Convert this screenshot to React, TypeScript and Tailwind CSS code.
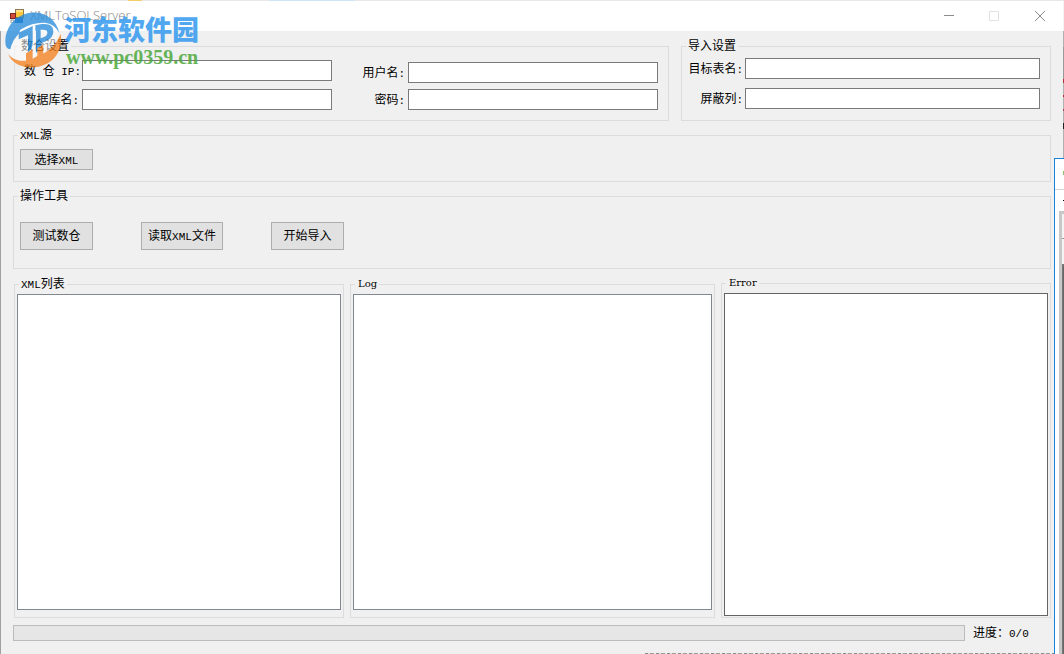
import type { ReactNode } from "react";

function Mixed({ text }: { text: string }) {
  return (
    <>
      {text.split(/([\x20-\x7e]+)/).map((part, i) =>
        /^[\x20-\x7e]+$/.test(part) ? (
          <span key={i} className="text-[11px]">
            {part}
          </span>
        ) : (
          part
        ),
      )}
    </>
  );
}

function Group({ title, className = "", children }: { title: string; className?: string; children: ReactNode }) {
  return (
    <fieldset className={`min-w-0 border border-[#dcdcdc] ${className}`}>
      <legend className="ml-1 h-4 px-0.5 leading-[18px]">
        {/^[\x20-\x7e]+$/.test(title) ? (
          <span className="block pl-px font-['DejaVu_Serif',serif] text-[10px] leading-4">{title}</span>
        ) : (
          <Mixed text={title} />
        )}
      </legend>
      {children}
    </fieldset>
  );
}

function Field({ id, label, labelClass, type = "text" }: { id: string; label: string; labelClass: string; type?: string }) {
  return (
    <div className="flex items-center">
      <label htmlFor={id} className={`shrink-0 pt-0.5 text-right whitespace-pre leading-4 ${labelClass}`}>
        <Mixed text={label} />
      </label>
      <input id={id} type={type} className="h-[21px] min-w-0 flex-1 border border-[#7a7a7a] bg-white px-1 outline-none" />
    </div>
  );
}

function PushButton({ label, className }: { label: string; className: string }) {
  return (
    <button type="button" className={`shrink-0 border border-[#adadad] bg-[#e1e1e1] pt-0.5 leading-4 whitespace-nowrap ${className}`}>
      <Mixed text={label} />
    </button>
  );
}

function ListPane({ title, className, padClass, boxClass }: { title: string; className?: string; padClass: string; boxClass: string }) {
  return (
    <Group title={title} className={`flex flex-col ${className ?? ""}`}>
      <div className={`flex flex-1 px-0.5 pt-0.5 ${padClass}`}>
        <textarea aria-label={title} readOnly className={`min-h-24 min-w-0 flex-1 resize-none border bg-white p-1 outline-none ${boxClass}`} />
      </div>
    </Group>
  );
}

function TitleBar() {
  return (
    <header className="flex h-[30px] items-center bg-white pl-2.5">
      <svg width="14" height="14" viewBox="0 0 14 14" aria-hidden="true">
        <rect x="5" y="0" width="9" height="9" fill="#8b7a4c" />
        <rect x="6" y="1" width="7" height="7" fill="#ffc83a" />
        <rect x="6" y="1" width="7" height="2" fill="#ffe08a" />
        <rect x="0" y="4" width="6" height="6" fill="#7b2525" />
        <rect x="1" y="5" width="4" height="4" fill="#d24a38" />
        <rect x="5" y="9" width="8" height="5" fill="#3872b8" />
        <rect x="1" y="11" width="3" height="3" fill="#fff" stroke="#999" />
      </svg>
      <h1 className="ml-1.5 flex-1 font-['Open_Sans',sans-serif] text-[13px] font-light text-[#888]">XMLToSQLServer</h1>
      <button type="button" aria-label="最小化" className="flex h-full w-[45px] items-center justify-center">
        <svg width="10" height="10" viewBox="0 0 10 10"><path d="M0 4.5h10" stroke="#8c8c8c" /></svg>
      </button>
      <button type="button" aria-label="最大化" disabled className="flex h-full w-[45px] items-center justify-center">
        <svg width="10" height="10" viewBox="0 0 10 10"><path d="M.5.5h9v9h-9z" fill="none" stroke="#e2e2e2" /></svg>
      </button>
      <button type="button" aria-label="关闭" className="flex h-full w-[47px] items-center justify-center">
        <svg width="10" height="10" viewBox="0 0 10 10"><path d="M0 0l10 10M10 0L0 10" stroke="#888" /></svg>
      </button>
    </header>
  );
}

function Watermark() {
  return (
    <div className="pointer-events-none absolute top-3 left-1 flex opacity-85">
      <svg width="60" height="56" viewBox="12 36 180 168" className="opacity-90" aria-hidden="true">
        <path d="M24 142C40 104 74 74 120 62c30-6 52 4 58 30-8 44-52 84-104 104C46 188 28 168 24 142z" fill="#fff" opacity=".7" />
        <path d="M17 136C10 88 44 42 94 38c44-3 76 22 84 62-10-20-24-30-44-32C88 66 44 92 17 136z" fill="#258cdc" />
        <path d="M17 136c8-22 24-40 42-52v14c-14 14-24 30-28 50-6 0-12-4-14-12z" fill="#258cdc" />
        <path d="M56 98l42-20v52c0 12-5 20-14 28V106l-28 12z" fill="#258cdc" />
        <path d="M106 76c36-10 54-2 54 18 0 18-14 30-36 34v22l-16 8V90h14v24c12-2 20-8 20-16 0-10-12-10-36-6z" fill="#258cdc" />
        <path
          d="M182 102c10 52-26 96-80 100-38 2-66-12-78-40 14 16 32 22 54 20v-22l20-12v28l14-8v-24l18-9v26c24-14 42-34 52-59z"
          fill="#f58220"
        />
      </svg>
      <div className="flex flex-col">
        <span className="font-['Noto_Sans_CJK_SC',sans-serif] text-[27px] leading-[34px] font-black text-[#3399ee]">河东软件园</span>
        <span className="ml-0.5 font-['Liberation_Serif',serif] text-[20px] leading-[22px] font-bold text-[#4da93c]">www.pc0359.cn</span>
      </div>
    </div>
  );
}

function BackgroundWindow() {
  return (
    <div className="absolute top-[158px] right-0 bottom-0 flex w-2.5 flex-col border-t border-l border-[#1883d7] bg-white" aria-hidden="true">
      <div className="flex h-[31px] items-center justify-end border-b border-[#d4d4d4] pb-0.5">
        <span className="h-1 w-px bg-[#8cc56c]" />
      </div>
      <div className="flex h-[21px] items-center justify-end">
        <span className="h-px w-px bg-black" />
      </div>
      <div className="ml-1 flex flex-1 flex-col border-t-3 border-l-3 border-[#c8c8c8]">
        <div className="h-[25px] border-b border-[#999] bg-[#f4f4f4]" />
        <div className="h-[25px] bg-[#f4f4f4]" />
        <div className="flex-1 border-t-2 border-l border-[#777] bg-[#666]" />
      </div>
    </div>
  );
}

export default function App() {
  return (
    <div className="relative flex min-h-screen flex-col bg-[#f0f0f0] font-['Liberation_Mono','Noto_Sans_CJK_SC',monospace] text-[12px] text-black">
      <div className="flex h-px bg-[#e8e8e8]">
        <span className="ml-32 w-3.5 bg-[#f4cf68]" />
        <span className="ml-32 w-[84px] bg-[#cfe4f8]" />
      </div>
      <div className="flex flex-1">
        <div className="flex min-w-0 flex-1 flex-col">
          <TitleBar />
          <main className="flex flex-1 flex-col border-l border-[#a0a0a0] px-3 pt-[7px] pb-[13px]">
            <div className="grid grid-cols-[655fr_370fr] gap-3 pl-px">
              <Group title="数仓设置">
                <div className="grid grid-cols-[308fr_297fr] gap-[29px] pr-2.5 pb-2.5 pl-[9px]">
                  <div className="flex flex-col gap-2 pt-1.5">
                    <Field id="ip" label="数 仓 IP:" labelClass="w-[58px] pr-[3px]" />
                    <Field id="db" label="数据库名:" labelClass="w-[58px] pr-[3px]" />
                  </div>
                  <div className="flex flex-col gap-1.5 pt-2">
                    <Field id="user" label="用户名:" labelClass="w-[47px] pr-[3px]" />
                    <Field id="password" label="密码:" labelClass="w-[47px] pr-[3px]" type="password" />
                  </div>
                </div>
              </Group>
              <Group title="导入设置">
                <div className="flex flex-col gap-[9px] pt-1 pr-2.5 pl-1.5">
                  <Field id="table" label="目标表名:" labelClass="w-[57px] pr-0.5" />
                  <Field id="mask" label="屏蔽列:" labelClass="w-[57px] pr-0.5" />
                </div>
              </Group>
            </div>

            <Group title="XML源" className="mt-1.5">
              <div className="flex px-1.5 pt-1.5 pb-[11px]">
                <PushButton label="选择XML" className="h-[21px] w-[73px]" />
              </div>
            </Group>

            <Group title="操作工具" className="mt-1.5">
              <div className="flex gap-12 px-1.5 py-[18px]">
                <PushButton label="测试数仓" className="h-7 w-[73px]" />
                <PushButton label="读取XML文件" className="h-7 w-[82px]" />
                <PushButton label="开始导入" className="h-7 w-[73px]" />
              </div>
            </Group>

            <div className="mt-1.5 grid flex-1 grid-cols-[330fr_365fr_330fr] gap-1.5 pl-px">
              <ListPane title="XML列表" className="mt-px" padClass="pb-[7px]" boxClass="border-[#828790]" />
              <ListPane title="Log" className="mt-px" padClass="pb-[7px]" boxClass="border-[#828790]" />
              <ListPane title="Error" padClass="pb-px" boxClass="border-[#646464]" />
            </div>

            <div className="mt-[7px] flex h-4 items-center gap-2">
              <progress
                aria-label="进度"
                value={0}
                max={1}
                className="h-4 min-w-0 flex-1 appearance-none border border-[#bcbcbc] bg-[#e6e6e6] [&::-webkit-progress-bar]:bg-[#e6e6e6]"
              />
              <output className="w-[78px] pt-0.5 leading-4 whitespace-nowrap">
                <Mixed text="进度：0/0" />
              </output>
            </div>
          </main>
        </div>
        <div className="flex w-px flex-col bg-[#b0b0b0]" aria-hidden="true">
          <span className="h-[30px] bg-[#f4f4f4]" />
          <span className="mt-4 h-8 bg-[#999]" />
          <span className="h-1 bg-[#b03038]" />
          <span className="mt-3 h-0.5 bg-[#b03038]" />
          <span className="mt-3 h-0.5 bg-[#a04850]" />
          <span className="mt-3 h-1.5 bg-[#222]" />
        </div>
      </div>
      <div className="absolute right-2.5 bottom-0 left-[645px] h-px bg-[repeating-linear-gradient(90deg,#8a8a8a_0_3px,#dcdcdc_3px_5px,#a39c90_5px_9px,#efefef_9px_11px)]" />
      <BackgroundWindow />
      <Watermark />
    </div>
  );
}
